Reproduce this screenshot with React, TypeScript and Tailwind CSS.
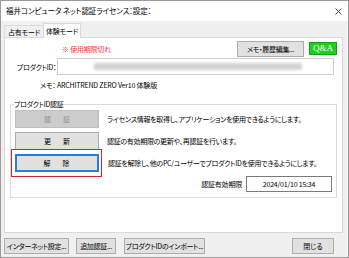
import React from 'react';

const font = "font-['Noto_Sans_CJK_JP','Noto_Sans',sans-serif] [font-feature-settings:'palt']";
const btn = 'flex items-center justify-center bg-[#e1e1e1] border border-[#adadad] text-black';

type RowProps = {
  label: [string, string];
  text: string;
  disabled?: boolean;
  focused?: boolean;
};

function ActionRow({ label, text, disabled = false, focused = false }: RowProps) {
  const button = (
    <div
      className={`w-[84px] h-[18px] flex items-center justify-center gap-[12px] border ${
        disabled
          ? 'bg-[#cccccc] border-[#bfbfbf] text-[#8c8c8c]'
          : focused
            ? 'bg-[#e1e1e1] border-2 border-[#2a7fd4] text-black'
            : 'bg-[#e1e1e1] border-[#adadad] text-black'
      }`}
    >
      <span>{label[0]}</span>
      <span>{label[1]}</span>
    </div>
  );

  return (
    <div className="flex items-center">
      {focused ? (
        <div className="-ml-[4px] -mt-[5px] -mb-[6px] pl-[2.5px] pr-[2.5px] pt-[3.5px] pb-[4.5px] border-[1.5px] border-[#d3222a]">
          {button}
        </div>
      ) : (
        button
      )}
      <span className={`${focused ? 'ml-[6px]' : 'ml-[8px]'} tracking-[-0.3px]`}>{text}</span>
    </div>
  );
}

export default function App() {
  return (
    <div className={`w-[349px] h-[258px] bg-[#f0f0f0] border border-[#9a9a9a] flex flex-col text-[7px] leading-[10px] text-black ${font}`}>
      {/* title bar */}
      <div className="h-[20px] bg-white flex items-center justify-between pl-[5px] pr-[6px] shrink-0">
        <span className="text-[7.5px] tracking-[-0.1px]">福井コンピュータ ネット認証ライセンス：設定：</span>
        <svg width="7" height="7" viewBox="0 0 7 7" className="text-[#333]">
          <path d="M0.5 0.5 L6.5 6.5 M6.5 0.5 L0.5 6.5" stroke="currentColor" strokeWidth="0.9" />
        </svg>
      </div>

      {/* tabs */}
      <div className="flex items-end h-[16px] pl-[3px] shrink-0">
        <div className="h-[12px] w-[39px] flex items-center justify-center bg-[#f0f0f0] border-t border-l border-[#d9d9d9] tracking-[-0.2px]">
          占有モード
        </div>
        <div className="relative z-10 -mb-px h-[15px] w-[38px] flex items-center justify-center bg-white border-t border-l border-r border-[#d9d9d9] tracking-[-0.2px]">
          体験モード
        </div>
      </div>

      {/* tab panel */}
      <div className="ml-[3px] w-[339px] h-[196px] bg-white border border-[#d9d9d9] flex flex-col shrink-0">
        <div className="flex items-center h-[17px] mt-[2px] pl-[57px] pr-[5px]">
          <span className="text-[#ff3333] tracking-[-0.2px]">※ 使用期限切れ</span>
          <div className="flex-1" />
          <div className={`${btn} w-[67px] h-[16px] tracking-[-0.3px]`}>メモ・履歴編集...</div>
          <div className="ml-[5px] w-[28px] h-[13px] flex items-center justify-center bg-[#1ed01e] border border-[#12a012] text-white font-['Liberation_Serif',serif] text-[9px] leading-none">
            Q&amp;A
          </div>
        </div>

        <div className="flex items-center h-[17px] mt-[1px] pl-[12px]">
          <span className="w-[40px] tracking-[-0.3px]">プロダクトID：</span>
          <div className="w-[277px] h-[17px] border border-[#cfcfcf] bg-white flex items-center pl-[36px]">
            <div className="w-[208px] h-[7px] bg-[#d2d2d2] blur-[1.5px]" />
          </div>
        </div>

        <div className="mt-[5px] pl-[35px] tracking-[-0.2px]">メモ： ARCHITREND ZERO Ver10 体験版</div>

        <fieldset className="mt-[9px] ml-[5px] w-[327px] border border-[#dcdcdc] pl-[3px] pr-[4px] pb-[5px] m-0">
          <legend className="px-0 tracking-[-0.3px]">プロダクトID認証</legend>
          <div className="flex flex-col gap-[4px] pl-[1px] pt-[1px]">
            <ActionRow label={['認', '証']} text="ライセンス情報を取得し、アプリケーションを使用できるようにします。" disabled />
            <ActionRow label={['更', '新']} text="認証の有効期限の更新や、再認証を行います。" />
            <ActionRow label={['解', '除']} text="認証を解除し、他のPC/ユーザーでプロダクトIDを使用できるようにします。" focused />
            <div className="flex items-center justify-end mt-[1px]">
              <span className="tracking-[-0.2px] mr-[4px]">認証有効期限</span>
              <div className="w-[86px] h-[16px] border border-[#7a7a7a] bg-white flex items-center justify-center tracking-[-0.2px]">
                2024/01/10 15:34
              </div>
            </div>
          </div>
        </fieldset>
      </div>

      {/* bottom buttons */}
      <div className="flex items-center mt-[5px] pl-[3px] pr-[14px] shrink-0">
        <div className={`${btn} w-[65px] h-[16px] tracking-[-0.3px]`}>インターネット設定...</div>
        <div className={`${btn} ml-[7px] w-[40px] h-[16px] tracking-[-0.3px]`}>追加認証...</div>
        <div className={`${btn} ml-[8px] w-[81px] h-[16px] tracking-[-0.3px]`}>プロダクトIDのインポート...</div>
        <div className="flex-1" />
        <div className={`${btn} w-[42px] h-[16px]`}>閉じる</div>
      </div>
    </div>
  );
}
